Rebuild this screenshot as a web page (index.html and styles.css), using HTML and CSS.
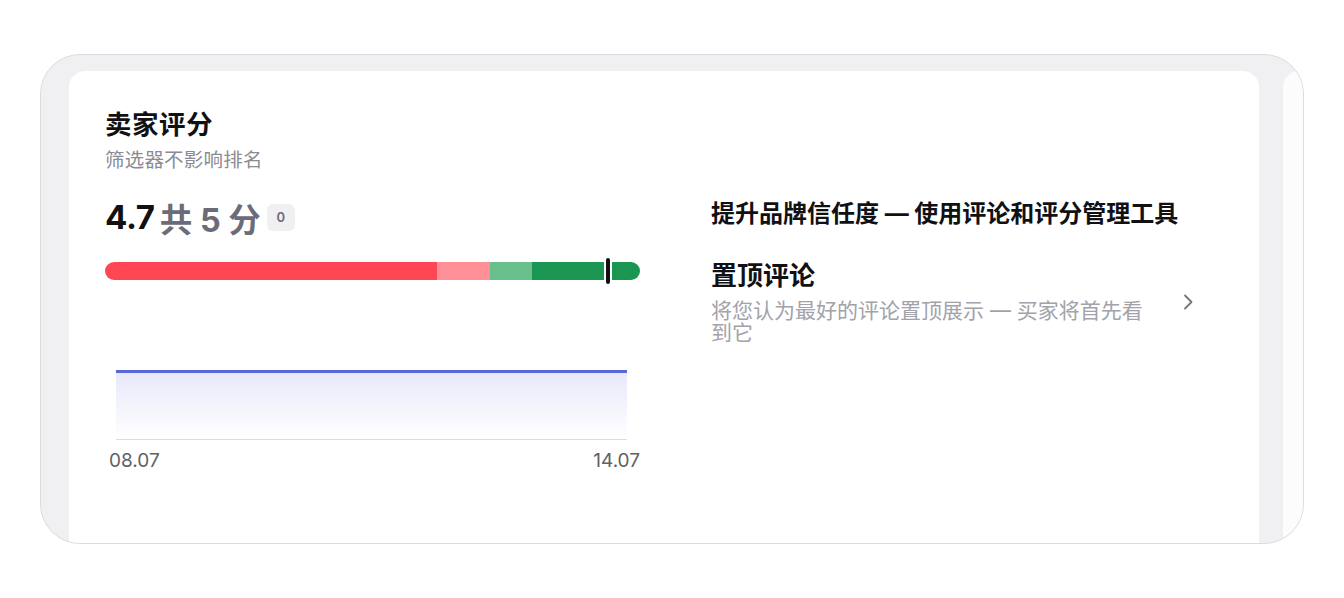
FILE: index.html
```html
<!DOCTYPE html>
<html lang="zh-CN">
<head>
<meta charset="utf-8">
<title>卖家评分</title>
<link rel="stylesheet" href="styles.css">
</head>
<body>
<div class="frame">
  <section class="card">
    <div class="col-left">
      <h1 class="title">卖家评分</h1>
      <p class="subtitle">筛选器不影响排名</p>
      <div class="score">
        <span class="score-value">4.7</span>
        <span class="score-total">共 5 分</span>
        <span class="badge">0</span>
      </div>
      <div class="bar">
        <span class="seg seg-red" style="width:332px"></span>
        <span class="seg seg-pink" style="width:53px"></span>
        <span class="seg seg-lightgreen" style="width:42px"></span>
        <span class="seg seg-green" style="width:108px"></span>
        <span class="marker" style="left:501px"></span>
      </div>
      <div class="chart">
        <div class="area"></div>
      </div>
      <div class="axis-labels">
        <span>08.07</span>
        <span>14.07</span>
      </div>
    </div>
    <div class="col-right">
      <h2 class="promo">提升品牌信任度 — 使用评论和评分管理工具</h2>
      <a class="tool" href="#">
        <div class="tool-text">
          <div class="tool-title">置顶评论</div>
          <div class="tool-desc">将您认为最好的评论置顶展示 — 买家将首先看到它</div>
        </div>
        <svg class="chevron" width="12" height="18" viewBox="0 0 12 18" aria-hidden="true">
          <path d="M3 2.5 L9.5 9 L3 15.5" fill="none" stroke="#74747c" stroke-width="1.8" stroke-linecap="round" stroke-linejoin="round"/>
        </svg>
      </a>
    </div>
  </section>
  <div class="peek"></div>
</div>
</body>
</html>
```

FILE: styles.css
```css
* { box-sizing: border-box; }

html, body {
  margin: 0;
  padding: 0;
  background: #ffffff;
}

body {
  font-family: "Inter", "Noto Sans CJK SC", sans-serif;
  color: #111114;
}

.frame {
  margin: 54px 0 0 40px;
  width: 1264px;
  height: 490px;
  border: 1px solid #dcdcdf;
  border-radius: 40px;
  overflow: hidden;
  background: #f0f0f2;
  display: flex;
  gap: 24px;
  padding: 16px 0 0 28px;
}

.card {
  flex: 0 0 1190px;
  background: #ffffff;
  border-radius: 16px 16px 0 0;
  display: flex;
  gap: 71px;
  padding: 37px 0 0 36px;
}

.peek {
  flex: 1;
  background: #fcfcfc;
  border-radius: 16px 0 0 0;
}

/* left column: score, distribution bar, trend chart */
.col-left {
  width: 535px;
  flex: 0 0 535px;
}

.title {
  margin: 0;
  font-size: 26.5px;
  line-height: 32px;
  font-weight: 700;
  letter-spacing: 0.5px;
}

.subtitle {
  margin: 8px 0 0;
  font-size: 19.5px;
  line-height: 24px;
  color: #8b8b94;
  letter-spacing: 0.2px;
}

.score {
  margin-top: 25px;
  display: flex;
  align-items: center;
  height: 40px;
  gap: 5px;
}

.score-value {
  font-size: 33px;
  font-weight: 700;
  color: #111114;
  letter-spacing: -0.3px;
}

.score-total {
  font-size: 32.5px;
  font-weight: 700;
  color: #6c6c78;
}

.badge {
  margin-left: 1px;
  width: 28px;
  height: 27px;
  border-radius: 6px;
  background: #f0f0f3;
  color: #6c6c78;
  font-size: 13px;
  font-weight: 600;
  display: flex;
  align-items: center;
  justify-content: center;
}

.bar {
  position: relative;
  margin-top: 25px;
  height: 18px;
  display: flex;
  border-radius: 9px;
}

.seg { height: 100%; display: block; }
.seg-red { background: #ff4654; border-radius: 9px 0 0 9px; }
.seg-pink { background: #ff8f96; }
.seg-lightgreen { background: #69bf8b; }
.seg-green { background: #1b9652; border-radius: 0 9px 9px 0; }

.marker {
  position: absolute;
  top: -4px;
  width: 4px;
  height: 26px;
  border-radius: 2px;
  background: #101012;
  box-shadow: 0 0 0 2px #ffffff;
}

.chart {
  margin: 90px 13px 0 11px;
}

.area {
  height: 70px;
  border-top: 3px solid #5868d6;
  border-bottom: 1px solid #dededf;
  background: linear-gradient(to bottom, #e7e9fa 0%, #f3f4fc 50%, #ffffff 100%);
}

.axis-labels {
  margin-top: 8px;
  display: flex;
  justify-content: space-between;
  padding-left: 4px;
  font-size: 19px;
  line-height: 26px;
  color: #5f5f66;
}

/* right column: tools promo */
.col-right {
  width: 484px;
  padding-top: 91px;
}

.promo {
  margin: 0;
  font-size: 24px;
  line-height: 30px;
  font-weight: 700;
  white-space: nowrap;
}

.tool {
  margin-top: 31px;
  display: flex;
  align-items: center;
  justify-content: space-between;
  text-decoration: none;
  color: inherit;
}

.tool-text {
  width: 442px;
}

.tool-title {
  font-size: 26px;
  line-height: 32px;
  font-weight: 700;
}

.tool-desc {
  margin-top: 8px;
  font-size: 21px;
  line-height: 22px;
  color: #a2a2aa;
}

.chevron {
  flex: 0 0 auto;
  margin-right: 1px;
}
```
